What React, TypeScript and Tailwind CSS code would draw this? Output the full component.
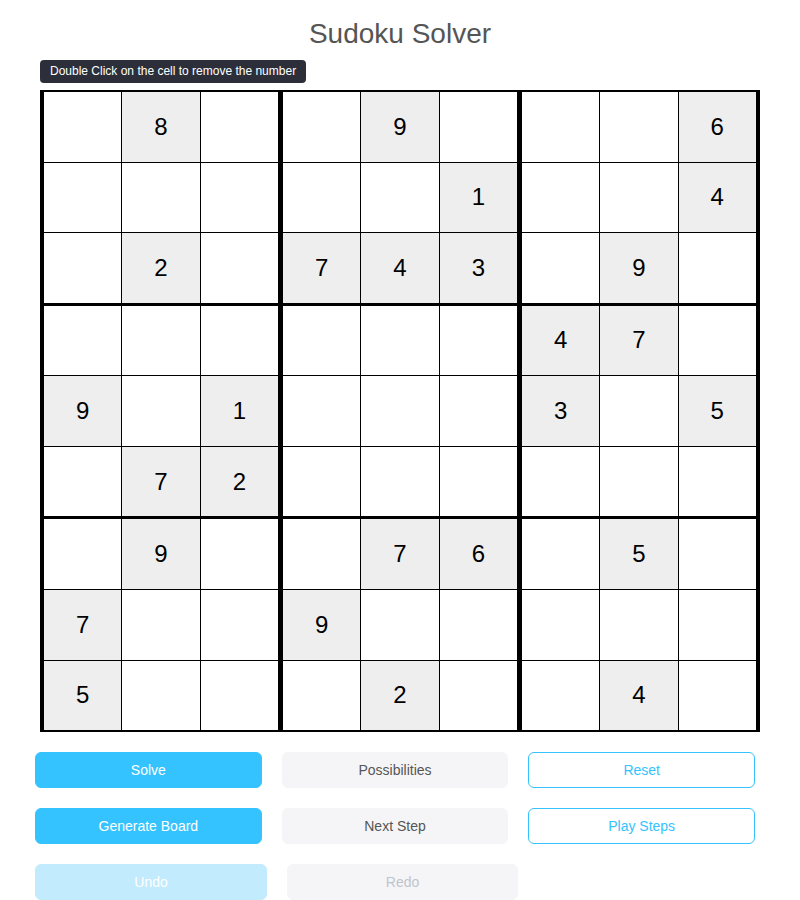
import { useState } from 'react'

const initial: number[][] = [
  [0, 8, 0, 0, 9, 0, 0, 0, 6],
  [0, 0, 0, 0, 0, 1, 0, 0, 4],
  [0, 2, 0, 7, 4, 3, 0, 9, 0],
  [0, 0, 0, 0, 0, 0, 4, 7, 0],
  [9, 0, 1, 0, 0, 0, 3, 0, 5],
  [0, 7, 2, 0, 0, 0, 0, 0, 0],
  [0, 9, 0, 0, 7, 6, 0, 5, 0],
  [7, 0, 0, 9, 0, 0, 0, 0, 0],
  [5, 0, 0, 0, 2, 0, 0, 4, 0],
]

function Cell({ value, col, onClear }: { value: number; col: number; onClear: () => void }) {
  const left = col === 0 ? '' : col === 3 || col === 6 ? 'border-l-[5px]' : 'border-l'
  return (
    <div
      onDoubleClick={onClear}
      className={`flex-1 flex items-center justify-center border-black text-[24px] text-black ${left} ${value ? 'bg-[#eeeeee]' : 'bg-white'}`}
    >
      {value ? value : ''}
    </div>
  )
}

function Btn({ label, kind, className = '' }: { label: string; kind: 'primary' | 'plain' | 'outline' | 'primaryOff' | 'plainOff'; className?: string }) {
  const styles = {
    primary: 'bg-[#35c3ff] text-white border-[#35c3ff]',
    plain: 'bg-[#f5f5f7] text-[#555555] border-[#f5f5f7]',
    outline: 'bg-white text-[#35c3ff] border-[#35c3ff]',
    primaryOff: 'bg-[#c2ebfe] text-white border-[#c2ebfe]',
    plainOff: 'bg-[#f5f5f7] text-[#c0c4cc] border-[#f5f5f7]',
  }
  return (
    <button className={`h-9 rounded-md border text-[14px] ${styles[kind]} ${className}`}>
      {label}
    </button>
  )
}

export default function App() {
  const [board, setBoard] = useState(initial)

  function clear(r: number, c: number) {
    setBoard(prev => prev.map((row, i) => row.map((v, j) => (i === r && j === c ? 0 : v))))
  }

  return (
    <div className="w-[800px] h-[900px] bg-white font-['Liberation_Sans',Arial,sans-serif] flex flex-col items-center">
      <h1 className="mt-[15px] text-[28px] leading-[38px] text-[#555555]">Sudoku Solver</h1>

      <div className="w-[720px] mt-[5px]">
        <div className="inline-block bg-[#2c2f3a] text-white text-[12px] leading-[23px] px-[10px] rounded">
          Double Click on the cell to remove the number
        </div>
      </div>

      {/* Board */}
      <div className="mt-[7px] w-[720px] h-[642px] flex flex-col border-l-4 border-r-4 border-t-2 border-b-2 border-black">
        {board.map((row, r) => (
          <div
            key={r}
            className={`flex-1 flex border-black ${r === 0 ? '' : r === 3 || r === 6 ? 'border-t-[3px]' : 'border-t'}`}
          >
            {row.map((v, c) => (
              <Cell key={c} value={v} col={c} onClear={() => clear(r, c)} />
            ))}
          </div>
        ))}
      </div>

      {/* Controls */}
      <div className="mt-[20px] w-[720px] flex flex-col gap-5 -translate-x-[5px]">
        <div className="grid grid-cols-3 gap-5">
          <Btn label="Solve" kind="primary" />
          <Btn label="Possibilities" kind="plain" />
          <Btn label="Reset" kind="outline" />
        </div>
        <div className="grid grid-cols-3 gap-5">
          <Btn label="Generate Board" kind="primary" />
          <Btn label="Next Step" kind="plain" />
          <Btn label="Play Steps" kind="outline" />
        </div>
        <div className="flex gap-5">
          <Btn label="Undo" kind="primaryOff" className="w-[232px]" />
          <Btn label="Redo" kind="plainOff" className="w-[231px]" />
        </div>
      </div>
    </div>
  )
}
